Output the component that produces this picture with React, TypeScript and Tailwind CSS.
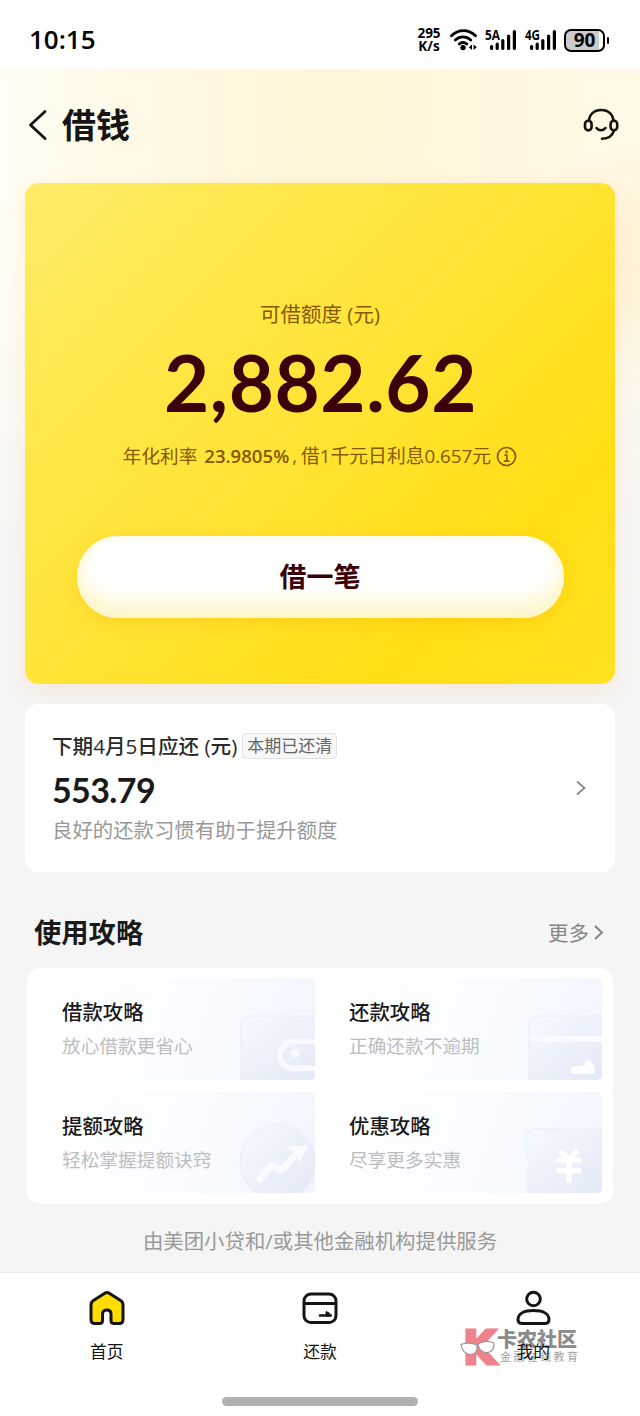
import type { ReactNode } from 'react'

function SignalBars({ label }: { label: string }) {
  return (
    <svg width="32" height="26" viewBox="0 -2 32 26" className="shrink-0 overflow-visible">
      <text
        x="0"
        y="11"
        textLength="15"
        lengthAdjust="spacingAndGlyphs"
        fontSize="14"
        fontWeight="700"
        fontFamily="Open Sans, sans-serif"
      >
        {label}
      </text>
      <g stroke="#000" strokeWidth="3.2" strokeLinecap="round">
        <path d="M6.6 17.5v2M12.2 15v4.5M17.8 11.5v8M23.6 7v12.500M29.4 2.500v17" />
      </g>
    </svg>
  )
}

function StatusBar() {
  return (
    <div className="flex h-[69px] shrink-0 items-center bg-white pt-[11px] pl-[29px] text-black">
      <span className="w-[387px] pb-[3px] font-['Open_Sans'] text-[26px] leading-[30px] font-semibold">
        10:15
      </span>
      <div className="w-[26px] text-center font-['Open_Sans'] text-[13.5px] leading-[13px] font-bold whitespace-pre-line">
        {'295\nK/s'}
      </div>
      <svg width="28" height="24" viewBox="0 0 28 24" className="ml-[7px]">
        <g fill="none" stroke="#000" strokeWidth="2.8" strokeLinecap="round">
          <path d="M2.5 7.8C9.4 1 19.6 1 26.5 7.8" />
          <path d="M6.3 12c4.5-4.1 10.9-4.1 15.4 0" />
          <path d="M10.2 16c2.5-2 5.2-2 7.6 0" />
        </g>
        <circle cx="14" cy="19.6" r="2.7" />
        <path d="M23 16.5v5.5l-3.2-2.7zM24.6 16.5v5.5l3.2-2.7z" />
      </svg>
      <div className="ml-2 flex gap-2">
        <SignalBars label="5A" />
        <SignalBars label="4G" />
      </div>
      <div className="ml-[7px] flex items-center gap-[2px]">
        <div className="flex h-[23px] w-[41px] items-center justify-center rounded-[7px] border-2 border-black bg-[linear-gradient(90deg,#cbcbcb_88%,#fff_88%)] font-['Open_Sans'] text-[19px] leading-5 font-bold">
          90
        </div>
        <div className="h-[7px] w-[2px] rounded bg-black" />
      </div>
    </div>
  )
}

function Header() {
  return (
    <header className="flex h-[114px] shrink-0 items-center justify-between pr-[21px] pb-[3px] pl-[28px]">
      <div className="flex items-center">
        <svg width="19" height="32" viewBox="0 0 19 32" fill="none" stroke="#151515" strokeWidth="2.8">
          <path d="M17 2.500 2.500 16 17 29.500" strokeLinecap="round" strokeLinejoin="round" />
        </svg>
        <h1 className="ml-[15px] text-[34px] leading-10 font-bold text-[#151515]">借钱</h1>
      </div>
      <svg width="36" height="34" viewBox="0 0 36 34" fill="none" stroke="#15130a" strokeWidth="2.6">
        <path d="M6 13.5C6 6.500 11 2 18.200 2s12.200 4.500 12.200 11.500" />
        <rect x="2" y="12.800" width="6.600" height="9.600" rx="3.300" />
        <rect x="27.600" y="12.800" width="6.600" height="9.600" rx="3.300" />
        <path d="M13.500 20c2.200 3 6.800 3 9 0M31 22.500c-1.500 5.200-5.600 8.100-12 8.300" strokeLinecap="round" />
      </svg>
    </header>
  )
}

function LoanCard() {
  return (
    <section className="mx-[25px] flex h-[501px] shrink-0 flex-col items-center rounded-[14px] bg-[linear-gradient(135deg,#ffec68_0%,#ffe748_28%,#ffe32e_55%,#ffde14_78%,#ffe222_100%)] pt-[117px] shadow-[0_6px_22px_rgba(255,150,60,0.13)]">
      <div className="text-[20.5px] leading-7 text-[#865800]">可借额度 (元)</div>
      <div className="mt-[14px] h-20 pl-px font-['Lato'] text-[78px] leading-[80px] font-bold tracking-[0.6px] whitespace-nowrap text-[#3c0008]">
        2,882.62
      </div>
      <div className="mt-5 flex items-center text-[18.6px] leading-7 whitespace-nowrap text-[#865800]">
        <span>年化利率</span>
        <span className="ml-[7px] font-semibold">23.9805%</span>
        <span className="ml-[3px]">,</span>
        <span className="ml-1 text-[18.800px]">借1千元日利息0.657元</span>
        <svg width="21" height="21" viewBox="0 0 21 21" fill="none" stroke="#865800" strokeWidth="1.7" className="ml-[5px]">
          <circle cx="10.500" cy="10.500" r="9" />
          <path d="M8.300 9h2.500v6M7.800 15.200h5.600" />
          <circle cx="10.600" cy="5.900" r="1.300" fill="#865800" stroke="none" />
        </svg>
      </div>
      <button className="mt-[66px] h-[82px] w-[487px] rounded-full bg-white text-[27px] font-bold text-[#3c0008] shadow-[inset_0_-18px_24px_-4px_#fff5c4,inset_0_0_12px_#fff9dc,0_5px_18px_rgba(255,170,0,0.28)]">
        借一笔
      </button>
    </section>
  )
}

function RepaymentCard() {
  return (
    <section className="mx-[25px] mt-5 flex h-[168px] shrink-0 items-center justify-between rounded-[14px] bg-white pr-7 pl-[27px]">
      <div>
        <div className="flex h-[26px] items-center gap-[5px]">
          <span className="text-[20.600px] leading-[26px] font-medium whitespace-nowrap text-[#2b2b2b]">
            下期4月5日应还 (元)
          </span>
          <span className="h-[26px] rounded-[4px] border border-[#e3e3e3] bg-[#f7f7f7] px-1 text-[17px] leading-[23px] text-[#666]">
            本期已还清
          </span>
        </div>
        <div className="mt-[10px] font-['Lato'] text-[34px] leading-[42px] font-bold tracking-[-0.6px] text-[#1a1a1a]">
          553.79
        </div>
        <div className="mt-[5px] text-[20.400px] leading-7 text-[#999]">良好的还款习惯有助于提升额度</div>
      </div>
      <svg width="12" height="16" viewBox="0 0 12 16" fill="none" stroke="#8a8a8a" strokeWidth="1.8">
        <path d="m2 1.500 7.500 6.500L2 14.500" />
      </svg>
    </section>
  )
}

const WalletArt = (
  <>
    <path d="M6 102V48q0-10 10-10h70v64z" fill="url(#art)" stroke="#e8edf8" />
    <rect x="45" y="63.500" width="50" height="27" rx="13.500" fill="none" stroke="#f8faff" strokeWidth="5.500" />
    <circle cx="60" cy="75" r="4.500" fill="#f8faff" />
  </>
)

const CardArt = (
  <>
    <path d="M7 102V48q0-10 10-10h69v64z" fill="url(#art)" stroke="#e8edf8" />
    <path d="M7 61h73" stroke="#f8faff" strokeWidth="6" />
    <path d="M50 96q-4-5 2-7l11-2q-1-5 4-5 7 4 6 14z" fill="#fff" />
  </>
)

const GrowthArt = (
  <>
    <circle cx="43" cy="70" r="38" fill="url(#art)" stroke="#e8edf8" />
    <path d="m23 89 14-16 9 6 18-20" fill="none" stroke="#fafbff" strokeWidth="6.500" strokeLinejoin="round" />
    <path d="M52 54h21l-9 17-4-9z" fill="#fafbff" />
  </>
)

const CouponArt = (
  <>
    <path d="M86 37H14Q4 37 4 47v13q0 6 4 9-2 2-2 8v25h80z" fill="url(#art)" stroke="#e8edf8" />
    <path
      d="m40 60 7 8 7-8M37 68h20M37 78.500h20M47 68v20"
      fill="none"
      stroke="#fff"
      strokeWidth="5.500"
      strokeLinecap="round"
      strokeLinejoin="round"
    />
  </>
)

const guides = [
  { title: '借款攻略', desc: '放心借款更省心', art: WalletArt },
  { title: '还款攻略', desc: '正确还款不逾期', art: CardArt },
  { title: '提额攻略', desc: '轻松掌握提额诀窍', art: GrowthArt },
  { title: '优惠攻略', desc: '尽享更多实惠', art: CouponArt },
]

function GuideTile({ title, desc, art }: { title: string; desc: string; art: ReactNode }) {
  return (
    <div className="relative overflow-hidden rounded-[5px] bg-[linear-gradient(110deg,#fff_5%,#fbfcff_45%,#f5f8fe_80%,#f0f4fc_100%)] pt-5 pl-6">
      <svg width="80" height="102" viewBox="0 0 80 102" className="absolute top-0 right-0">
        <defs>
          <linearGradient id="art" x1="0" y1="0" x2="1" y2="1">
            <stop offset="0" stopColor="#f7f9ff" />
            <stop offset="1" stopColor="#e2e8f6" />
          </linearGradient>
        </defs>
        {art}
      </svg>
      <div className="relative text-[20.400px] leading-7 font-medium text-[#1a1a1a]">{title}</div>
      <div className="relative mt-2 text-[18.700px] leading-6 text-[#bdbdc0]">{desc}</div>
    </div>
  )
}

function Guides() {
  return (
    <section className="shrink-0">
      <div className="mt-[41px] flex h-10 items-center justify-between pr-9 pl-[34px]">
        <h2 className="text-[27.300px] leading-10 font-bold text-[#1a1a1a]">使用攻略</h2>
        <div className="flex items-center gap-[5px] text-[20.500px] text-[#858585]">
          更多
          <svg width="10" height="16" viewBox="0 0 10 16" fill="none" stroke="#858585" strokeWidth="2">
            <path d="m1 1 7 6.500-7 6.500" />
          </svg>
        </div>
      </div>
      <div className="mx-[27px] mt-[15px] grid h-[236px] grid-cols-2 grid-rows-2 gap-x-[10px] gap-y-3 rounded-[14px] bg-white px-[11px] pt-[10px] pb-[11px]">
        {guides.map((g) => (
          <GuideTile key={g.title} {...g} />
        ))}
      </div>
    </section>
  )
}

function HomeIcon() {
  return (
    <svg width="36" height="36" viewBox="0 0 36 36">
      <path
        d="M15.800 3.300 4 10.800Q2 12.200 2 15v14.500Q2 33.500 6 33.500h4.500q3 0 3-3V24c0-2.400 1.800-4 4.300-4s4.200 1.600 4.200 4v6.500q0 3 3 3H30q4 0 4-4V15q0-2.800-2-4.200L20.200 3.300q-2.200-1.400-4.400 0z"
        fill="#ffdd00"
        stroke="#151515"
        strokeWidth="3"
        strokeLinejoin="round"
      />
    </svg>
  )
}

function RepayIcon() {
  return (
    <svg width="36" height="36" viewBox="0 0 36 36" fill="none" stroke="#151515" strokeWidth="3">
      <rect x="2" y="4" width="32" height="28.500" rx="7" />
      <path d="M2 13.500h32" />
      <path d="M18 25.500h10.500" strokeWidth="2.600" strokeLinecap="round" />
      <path d="M24 21.500q4 1 5.500 4.500H24z" fill="#151515" strokeWidth="1" />
    </svg>
  )
}

function MineIcon() {
  return (
    <svg width="36" height="36" viewBox="0 0 36 36" fill="none" stroke="#151515" strokeWidth="3">
      <circle cx="18.500" cy="9" r="6.800" />
      <path d="M3 29.500C3 23.500 9.500 20.500 18.500 20.500s15.500 3 15.500 9q0 4-4.500 4h-22q-4.500 0-4.500-4z" />
    </svg>
  )
}

const tabs = [
  { label: '首页', icon: <HomeIcon /> },
  { label: '还款', icon: <RepayIcon /> },
  { label: '我的', icon: <MineIcon /> },
]

function Watermark() {
  return (
    <div className="absolute top-[54px] left-[460px] flex text-[#8b8b8b]">
      <svg width="36" height="40" viewBox="0 0 36 40" className="overflow-visible">
        <text
          x="3"
          y="36.500"
          textLength="33"
          lengthAdjust="spacingAndGlyphs"
          fontFamily="DejaVu Sans, sans-serif"
          fontWeight="700"
          fontSize="46"
          fill="#f0828b"
          stroke="#f0828b"
          strokeWidth="3"
        >
          K
        </text>
        <g fill="#fff" stroke="#999" strokeWidth="1.200">
          <path d="M1 17.500q8-3 16 .500 1 9-6.500 9.500Q2.500 27 1 17.500zM18 17q8-4.500 16-1 .500 8-6 9.500-8 1-10-8.500z" />
        </g>
      </svg>
      <div className="ml-px pt-[2px]">
        <div className="text-[20px] leading-[22px] font-black">卡农社区</div>
        <div className="ml-[3px] text-[11px] leading-[12px] tracking-[2.400px] whitespace-nowrap text-[#a3a3a3]">
          金融在线教育
        </div>
      </div>
    </div>
  )
}

function TabBar() {
  return (
    <nav className="relative flex h-[144px] shrink-0 flex-col border-t border-[#e9e9e9] bg-white">
      <Watermark />
      <div className="relative grid h-[124px] grid-cols-3">
        {tabs.map((t) => (
          <div key={t.label} className="flex flex-col items-center pt-[17px]">
            {t.icon}
            <span className="mt-[14px] text-[16.800px] leading-6 text-[#151515]">{t.label}</span>
          </div>
        ))}
      </div>
      <div className="mx-auto h-[9px] w-[196px] rounded-full bg-[#b0b0b0]" />
    </nav>
  )
}

export default function App() {
  return (
    <div className="flex h-[1416px] w-[640px] flex-col overflow-hidden bg-[#f5f5f5] font-['Open_Sans','Noto_Sans_CJK_SC',sans-serif]">
      <StatusBar />
      <main className="flex grow flex-col bg-[linear-gradient(180deg,transparent_0,transparent_200px,#f5f5f5_500px),radial-gradient(circle_at_640px_200px,#fff2d2_0,transparent_130px),radial-gradient(ellipse_at_330px_0,#fff6d9_0,transparent_330px),linear-gradient(90deg,#fffdf4_0%,#fff9e6_60%,#fff9e8_100%)]">
        <Header />
        <LoanCard />
        <RepaymentCard />
        <Guides />
        <p className="mt-[23px] text-center text-[20.400px] leading-7 text-[#999]">
          由美团小贷和/或其他金融机构提供服务
        </p>
      </main>
      <TabBar />
    </div>
  )
}
